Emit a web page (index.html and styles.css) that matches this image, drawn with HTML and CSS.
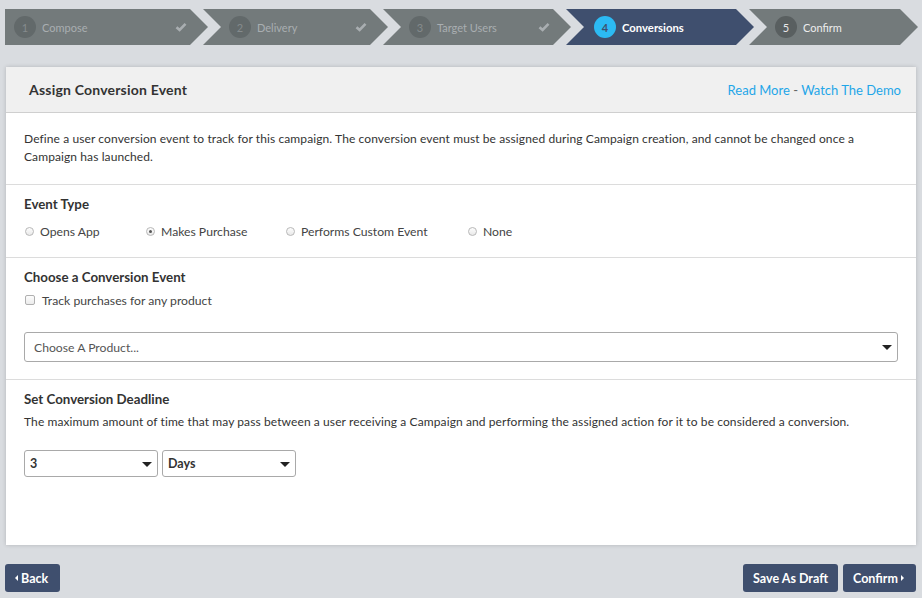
FILE: index.html
```html
<!DOCTYPE html>
<html>
<head>
<meta charset="utf-8">
<link rel="stylesheet" href="styles.css">
</head>
<body>
<div class="steps">
  <div class="step first done">
    <span class="num">1</span><span class="label">Compose</span>
    <svg class="check" viewBox="0 0 12 10" width="12" height="10"><polyline points="1.5,5.2 4.6,8 10.5,1.8" fill="none" stroke="currentColor" stroke-width="2.6"/></svg>
  </div>
  <div class="step done s2">
    <span class="num">2</span><span class="label">Delivery</span>
    <svg class="check" viewBox="0 0 12 10" width="12" height="10"><polyline points="1.5,5.2 4.6,8 10.5,1.8" fill="none" stroke="currentColor" stroke-width="2.6"/></svg>
  </div>
  <div class="step done s3">
    <span class="num">3</span><span class="label">Target Users</span>
    <svg class="check" viewBox="0 0 12 10" width="12" height="10"><polyline points="1.5,5.2 4.6,8 10.5,1.8" fill="none" stroke="currentColor" stroke-width="2.6"/></svg>
  </div>
  <div class="step active s4">
    <span class="num">4</span><span class="label">Conversions</span>
  </div>
  <div class="step todo s5">
    <span class="num">5</span><span class="label">Confirm</span>
  </div>
</div>

<div class="panel">
  <div class="panel-head">
    <h1 class="title">Assign Conversion Event</h1>
    <div class="links"><a class="link">Read More</a><span class="dash"> - </span><a class="link">Watch The Demo</a></div>
  </div>
  <div class="section intro">
    <p class="text">Define a user conversion event to track for this campaign. The conversion event must be assigned during Campaign creation, and cannot be changed once a Campaign has launched.</p>
  </div>
  <div class="section">
    <h2 class="sec-title">Event Type</h2>
    <div class="radios">
      <label class="radio r1"><span class="dot"></span>Opens App</label>
      <label class="radio r2"><span class="dot checked"></span>Makes Purchase</label>
      <label class="radio r3"><span class="dot"></span>Performs Custom Event</label>
      <label class="radio r4"><span class="dot"></span>None</label>
    </div>
  </div>
  <div class="section">
    <h2 class="sec-title">Choose a Conversion Event</h2>
    <label class="checkbox"><span class="box"></span>Track purchases for any product</label>
    <div class="select wide"><span class="placeholder">Choose A Product...</span><span class="caret"></span></div>
  </div>
  <div class="section last">
    <h2 class="sec-title">Set Conversion Deadline</h2>
    <p class="text gap">The maximum amount of time that may pass between a user receiving a Campaign and performing the assigned action for it to be considered a conversion.</p>
    <div class="selects">
      <div class="select small"><span class="value">3</span><span class="caret"></span></div>
      <div class="select small"><span class="value">Days</span><span class="caret"></span></div>
    </div>
  </div>
</div>

<div class="footer">
  <button class="btn back"><span class="tri-left"></span>Back</button>
  <div class="right-btns">
    <button class="btn">Save As Draft</button>
    <button class="btn confirm">Confirm<span class="tri-right"></span></button>
  </div>
</div>
</body>
</html>
```
FILE: styles.css
```css
* { box-sizing: border-box; }
html, body { margin: 0; padding: 0; }
body {
  background: #d9dce0;
  font-family: Lato, "Open Sans", sans-serif;
  color: #333;
  width: 922px;
  height: 598px;
  overflow: hidden;
}

/* steps */
.steps {
  display: flex;
  padding: 9px 0 0 5px;
  height: 45px;
}
.step {
  height: 36px;
  display: flex;
  align-items: center;
  background: #737a7b;
  margin-left: -5px;
  padding-left: 26px;
  padding-right: 21px;
  clip-path: polygon(0 0, calc(100% - 18px) 0, 100% 50%, calc(100% - 18px) 100%, 0 100%, 18px 50%);
  font-size: 11px;
  color: #a9aeb1;
}
.step.first {
  margin-left: 0;
  padding-left: 9px;
  width: 203px;
  clip-path: polygon(0 0, calc(100% - 18px) 0, 100% 50%, calc(100% - 18px) 100%, 0 100%);
}
.s2 { width: 185px; }
.s3 { width: 188px; }
.s4 { width: 188px; padding-left: 28px; }
.s5 { width: 169px; }
.num {
  width: 22px;
  height: 22px;
  border-radius: 50%;
  background: #62696a;
  color: #858b8d;
  display: flex;
  align-items: center;
  justify-content: center;
  margin-right: 6px;
  font-size: 11px;
}
.check { margin-left: auto; color: #a9aeb1; }
.step.active { background: #3f4f6e; color: #fff; font-weight: 700; font-size: 11.3px; }
.step.active .num { background: #2cbaf4; color: #3f4f6e; font-weight: 700; }
.step.todo { color: #ededed; }
.step.todo .num { background: #595f60; color: #e8e8e8; }

/* panel */
.panel {
  margin: 22px 6px 0 6px;
  height: 478px;
  background: #fff;
  box-shadow: 0 0 4px rgba(0, 0, 0, 0.18);
}
.panel-head {
  height: 46px;
  background: #f0f0f0;
  border-bottom: 1px solid #cfcfcf;
  display: flex;
  align-items: center;
  justify-content: space-between;
  padding: 0 15px 0 23px;
}
.title { margin: 0; font-size: 14px; letter-spacing: 0.2px; font-weight: 700; color: #333; }
.links { font-size: 13px; color: #555; }
.link { color: #1fa6e8; }
.dash { color: #666; }

.section {
  padding: 10px 18px 17px;
  border-bottom: 1px solid #dcdcdc;
}
.section.intro { padding: 17px 18px 18px; }
.section.last { border-bottom: 0; }
.text { margin: 0; font-size: 12px; letter-spacing: 0.1px; line-height: 18px; color: #333; }
.text.gap { margin-top: 5px; }
.sec-title { margin: 0; font-size: 13.3px; font-weight: 700; line-height: 18px; color: #333; }

.radios { display: flex; margin-top: 9px; height: 18px; align-items: center; }
.radio { display: flex; align-items: center; font-size: 12.2px; color: #444; }
.r1 { width: 121px; }
.r2 { width: 140px; }
.r3 { width: 182px; }
.dot {
  width: 9px;
  height: 9px;
  border-radius: 50%;
  border: 1px solid #b8b8b8;
  background: linear-gradient(#fdfdfd, #e9e9e9);
  margin-right: 6px;
  margin-left: 1px;
  display: flex;
  align-items: center;
  justify-content: center;
}
.dot.checked::after {
  content: "";
  width: 3px;
  height: 3px;
  border-radius: 50%;
  background: #555;
}

.checkbox { display: flex; align-items: center; margin-top: 5px; height: 18px; font-size: 12.2px; color: #444; }
.box {
  width: 10px;
  height: 10px;
  border: 1px solid #b0b0b0;
  border-radius: 2px;
  background: linear-gradient(#fdfdfd, #ececec);
  margin: 0 7px 0 1px;
}

.select {
  position: relative;
  display: flex;
  align-items: center;
  border: 1px solid #a9a9a9;
  border-radius: 3px;
  background: #fff;
  padding-left: 9px;
  font-size: 12.2px;
}
.select.wide { margin-top: 23px; height: 30px; }
.placeholder { color: #555; }
.select.small { width: 134px; height: 27px; padding-left: 5px; }
.value { font-weight: 700; color: #333; font-size: 12.5px; }
.caret {
  position: absolute;
  right: 5px;
  top: 50%;
  margin-top: -2px;
  width: 0;
  height: 0;
  border-left: 5px solid transparent;
  border-right: 5px solid transparent;
  border-top: 5px solid #222;
}
.selects { display: flex; gap: 4px; margin-top: 19px; }

/* footer */
.footer {
  display: flex;
  justify-content: space-between;
  padding: 19px 6px 0 5px;
}
.right-btns { display: flex; gap: 5px; }
.btn {
  height: 28px;
  border: 0;
  border-radius: 3px;
  background: #3f4f6e;
  color: #fff;
  font-family: Lato, "Open Sans", sans-serif;
  font-size: 12.5px;
  font-weight: 700;
  padding: 0 10px;
  display: flex;
  align-items: center;
}
.back { width: 55px; padding: 0 0 0 10px; }
.confirm { width: 73px; }
.tri-left {
  width: 0; height: 0;
  border-top: 3.5px solid transparent;
  border-bottom: 3.5px solid transparent;
  border-right: 3.5px solid #fff;
  margin-right: 3px;
}
.tri-right {
  width: 0; height: 0;
  border-top: 3.5px solid transparent;
  border-bottom: 3.5px solid transparent;
  border-left: 3.5px solid #fff;
  margin-left: 3px;
}
```
